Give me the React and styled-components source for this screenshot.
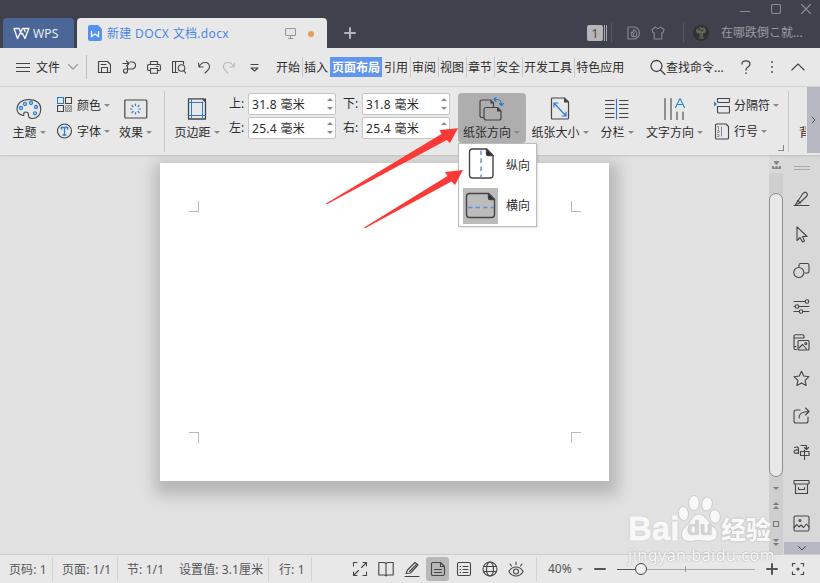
import React from 'react';
import styled, { createGlobalStyle } from 'styled-components';

const INK = '#454545';
const BLUE = '#2b7cd3';

const GlobalStyle = createGlobalStyle`
  * { box-sizing: border-box; }
  body {
    margin: 0;
    overflow: hidden;
    font-family: "Noto Sans", "Noto Sans CJK SC", sans-serif;
    font-size: 12px;
    color: #2c2c2c;
  }
`;

function Glyph({ w = 16, h = 16, color = INK, sw = 1.1, children }) {
  return (
    <svg width={w} height={h} viewBox={`0 0 ${w} ${h}`} fill="none" stroke={color}
      strokeWidth={sw} strokeLinecap="round" strokeLinejoin="round">
      {children}
    </svg>
  );
}

/* ---------- title bar ---------- */

function WindowControls() {
  return (
    <Controls>
      <Glyph w={10} h={12} color="#8a8d96"><path d="M0 8.5H10" /></Glyph>
      <Glyph w={10} h={12} color="#8a8d96"><rect x="0.5" y="1.500" width="9" height="9" rx="1.5" /></Glyph>
      <Glyph w={10} h={12} color="#8a8d96"><path d="M.5 1.500L9.5 10.500M9.5 1.500L.5 10.500" /></Glyph>
    </Controls>
  );
}

function TitleBar() {
  return (
    <TitleRow>
      <WpsTab>
        <Glyph w={17} h={13} color="#f4f6fa" sw={1.4}>
          <path d="M1 1.500H6L8.500 7M1 1.500L4.500 11.500L9.500 1.500H15.800L12 11.500L9.500 6.500M12 4.500L11 1.500" />
        </Glyph>
        <span>WPS</span>
      </WpsTab>
      <DocTab>
        <svg width="14" height="16" viewBox="0 0 14 16">
          <path d="M2 0H10L14 4V14Q14 16 12 16H2Q0 16 0 14V2Q0 0 2 0Z" fill="#5591f3" />
          <path d="M3.500 6V11.5L7 9L10.500 11.5V6" fill="none" stroke="#fff" strokeWidth="1.3" />
        </svg>
        <DocName>新建 DOCX 文档.docx</DocName>
        <Glyph w={12} h={12} color="#959595">
          <rect x="0.5" y="1.500" width="10" height="7" rx="1" /><path d="M5.500 9V11M3.5 11.500H8" />
        </Glyph>
        <UnsavedDot />
      </DocTab>
      <NewTab><Glyph w={12} h={12} color="#b3b5ba" sw={2}><path d="M6 1V11M1 6H11" /></Glyph></NewTab>
      <TitleRight>
        <CountBadge>1</CountBadge>
        <StackLines />
        <DarkRule $ml={3} $mr={15} />
        <Glyph w={14} h={14} color="#858892">
          <path d="M1 1H6.5A6 6 0 0 1 6.5 13H1Z" />
          <path d="M7 3.5Q7.5 5 9.5 6Q11 10.5 7 10.8Q3.300 10.500 4.500 6Q5.500 6.500 5.700 6.800Q6 5 7 3.500ZM7 10.500Q5.500 9 7.200 7" />
        </Glyph>
        <Shirt>
          <Glyph w={14} h={14} color="#858892">
            <path d="M4.500 1Q7 4 9.500 1L13 3.500L12 6.800H10.800V13H3.200V6.800H2L1 3.500Z" />
          </Glyph>
        </Shirt>
        <DarkRule $ml={18} $mr={9} />
        <svg width="16" height="16" viewBox="0 0 16 16">
          <circle cx="8" cy="8" r="8" fill="#30322f" />
          <path d="M3 6L4 3L6 4L7 1.500L9 3L11 2L13 5L12.500 7.500L10 8.500L6 8L4 8.500Z" fill="#61645b" />
          <path d="M5.500 7.500H10.500L9.500 10L11 13.500H5.500L7 10Z" fill="#6e6d62" />
          <path d="M4.500 5L7 4L8.500 6L11 4.500M7 9H9M6 12H10" stroke="#34362f" fill="none" />
        </svg>
        <UserName>在哪跌倒こ就...</UserName>
      </TitleRight>
      <WindowControls />
    </TitleRow>
  );
}

/* ---------- menu bar ---------- */

const QUICK = [
  <><path d="M1.500 1.500H10.500L13.500 4.500V12.500H1.500Z" /><path d="M4.500 12.500V7.500H10.500V12.500M4 4.500H9" /></>,
  <><path d="M1 3.500H6.500M4.500 1L7 3.500L4.500 6M8 2H10A3.500 3.500 0 0 1 10 9H3.500A2 2 0 1 0 5.500 11V6.500" /></>,
  <><path d="M3.500 4V1.500H10.500V4M3 10.500H1.500Q.6 10.500 .6 9.500V5.500Q.6 4.500 2 4.500H12Q13.400 4.500 13.400 5.500V9.500Q13.400 10.500 12.500 10.500H11M3.500 8.500H10.500V13.300H3.500ZM9.500 6.500H11" /></>,
  <><path d="M5.500 12.500H.5V1.500H11.500V4M3.500 1.500V12.500M12 11L14 13.300" /><circle cx="9.500" cy="8" r="3.300" /></>,
  <path d="M1.500 3L2 7H6M2 7Q4 2.500 8 2.500A4 4 0 0 1 12.500 7Q12.500 9 8 13" />,
];

const MENUS = ['开始', '插入', '页面布局', '引用', '审阅', '视图', '章节', '安全', '开发工具', '特色应用'];

function MenuBar() {
  return (
    <MenuRow>
      <FileMenu>
        <Glyph w={14} h={11}><path d="M0 1.500H14M0 5.500H14M0 9.500H14" /></Glyph>
        <span>文件</span>
        <Glyph w={10} h={6} color="#999"><path d="M.5 .5L5 5L9.500 .5" /></Glyph>
      </FileMenu>
      <QuickTools>
        {QUICK.map((q, i) => <Glyph key={i} w={14} h={14}>{q}</Glyph>)}
        <Glyph w={14} h={14} color="#b8b8b8">
          <path d="M12.500 3L12 7H8M12 7Q10 2.500 6 2.500A4 4 0 0 0 1.500 7Q1.500 9 6 13" />
        </Glyph>
        <Glyph w={14} h={14}><path d="M4 4.500H11M4 8L7.500 11L11 8Z" /></Glyph>
      </QuickTools>
      <Menus>
        {MENUS.map((m) => <MenuItem key={m} $active={m === '页面布局'}>{m}</MenuItem>)}
      </Menus>
      <Search>
        <Glyph w={16} h={16} sw={1.3}><circle cx="6.500" cy="7" r="5.500" /><path d="M10.500 11L15 15.500" /></Glyph>
        <span>查找命令...</span>
      </Search>
      <MenuEnd>
        <Glyph w={10} h={14} sw={1.3}>
          <path d="M1 4Q1 .8 5 .8Q9 .8 9 4Q9 5.800 7 7Q5 8 5 10" /><path d="M5 13V13.200" strokeWidth="1.600" />
        </Glyph>
        <Glyph w={4} h={14} sw={1.8}><path d="M2 2V2.100M2 7V7.100M2 12V12.100" /></Glyph>
        <Glyph w={14} h={8}><path d="M.8 7L7 1L13.200 7" /></Glyph>
      </MenuEnd>
    </MenuRow>
  );
}

/* ---------- ribbon ---------- */

const PaletteIcon = () => (
  <Glyph w={26} h={22}>
    <path d="M7 17.500Q1 16 1 11Q1.500 2 13 1.500Q24.500 2 24.800 11Q24.500 20 16.500 20.500Q12.500 20.500 12.500 17.500Q12.800 14 9.500 14Q7.500 14 7.800 16.500Q8 17.800 7 17.500Z" />
    <g fill="#a7c9ec" stroke={BLUE}>
      <circle cx="5" cy="10" r="1.600" /><circle cx="9" cy="6" r="1.600" /><circle cx="15" cy="5" r="1.600" />
      <circle cx="20" cy="9" r="1.600" /><circle cx="19" cy="15.300" r="1.600" />
    </g>
  </Glyph>
);
const ColorsIcon = () => (
  <Glyph w={16} h={16}>
    <rect x="0.5" y="0.5" width="6" height="6" stroke={BLUE} /><rect x="8.500" y="0.5" width="6" height="6" />
    <rect x="0.500" y="8.500" width="6" height="6" />
    <rect x="8.500" y="8.500" width="6" height="6" stroke="#999" /><path d="M9 12L12 9M9.500 14L14 9.500M12 14L14 12" stroke="#999" />
  </Glyph>
);
const FontIcon = () => (
  <Glyph w={16} h={16}>
    <circle cx="7.500" cy="8" r="7" /><path d="M4.300 6V4.500H10.700V6M7.500 4.500V12M6 12H9" stroke={BLUE} strokeWidth="1.300" />
  </Glyph>
);
const EffectIcon = () => (
  <Glyph w={24} h={20} sw={1.2}>
    <rect x="0.800" y="1" width="22" height="18" rx="1" />
    <path d="M11.500 5V6.500M11.500 13.500V15M6.500 10H8M15 10H16.500M8 6.500L9 7.500M14 12.500L15 13.500M15 6.500L14 7.500M9 12.500L8 13.500" stroke={BLUE} />
  </Glyph>
);
const MarginIcon = () => (
  <Glyph w={20} h={22} sw={1.3}>
    <path d="M1.500 .800H15.500L18.500 3.800V21H1.500Z" /><path d="M15 .5L19 4.500V.5Z" fill={INK} stroke="none" />
    <path d="M4.500 1.500V20.500M15.500 4V20.500M2 4.500H16M2 17.500H18" stroke={BLUE} strokeWidth="1" />
  </Glyph>
);
const OrientIcon = () => (
  <Glyph w={26} h={24} sw={1.2}>
    <path d="M4.500 20.500H3Q1 20.500 1 18.500V5Q1 3 3 3H11.500L14.500 6V9.500" />
    <path d="M7 10.500H18.500L22 14V21Q22 23 20 23H7Q5 23 5 21V12.500Q5 10.500 7 10.500Z" />
    <path d="M18 10.500L22.500 14.500H18ZM11.500 3L15 6.500H11.500Z" fill={INK} stroke="none" />
    <path d="M15 2.500H18Q22.500 2.500 22.500 8.500M17 .5L15 2.500L17 4.500M20.500 6.500L22.500 8.700L24.500 6.500" stroke={BLUE} />
  </Glyph>
);
const SizeIcon = () => (
  <Glyph w={20} h={23} sw={1.2}>
    <path d="M2.500 1H14.500L18.500 5V21Q18.500 22 17.500 22H2.500Q1.500 22 1.500 21V2Q1.500 1 2.500 1Z" />
    <path d="M14 1L18.800 5.500H14Z" fill={INK} stroke="none" />
    <path d="M4 6L16 19M4 10V6H8M12 19H16V15" stroke={BLUE} />
  </Glyph>
);
const ColumnsIcon = () => (
  <Glyph w={24} h={22}>
    <path d="M.5 2.500H9M.5 6.500H9M.5 10.500H9M.5 15.500H9M.5 19.500H9M14.500 2.500H23M14.500 6.500H23M14.500 10.500H23M14.500 15.500H23M14.500 19.500H23" />
    <path d="M11.500 1V21" stroke={BLUE} />
  </Glyph>
);
const TextDirIcon = () => (
  <Glyph w={22} h={24}>
    <path d="M1 1.500V22.500M7 1.500V22.500M13 15V22.500M19 15V22.500" />
    <path d="M11.500 10.500L16 1.500L20.500 10.500M13.500 7.500H18.500" stroke={BLUE} />
  </Glyph>
);
const BreakIcon = () => (
  <Glyph w={17} h={17}>
    <path d="M3.500 1.500H15.500V4.500Q15.500 5.500 14.500 5.500H4.500Q3.500 5.500 3.500 4.500ZM3.500 9.500H15.500M3.500 9.500V15Q3.500 16 4.500 16H14.500Q15.500 16 15.500 15V11.500Q15.500 9.500 14 9.500" />
    <path d="M0 4.500L3 7L0 9.500Z" fill={BLUE} stroke="none" />
  </Glyph>
);
const LineNoIcon = () => (
  <Glyph w={16} h={17}>
    <path d="M2.500 1H12L14.500 3.500V15Q14.500 16 13.500 16H2.500Q1.500 16 1.500 15V2Q1.500 1 2.500 1Z" />
    <path d="M7.500 4V13M3.500 3.500H4.500V6M3.500 7.500H5V9.500H3.500M3.500 11.500H5V13.500H3.500" stroke="#888" strokeWidth="1" />
  </Glyph>
);

const BigButton = ({ icon, label, ...rest }) => (
  <BigBox {...rest}>
    <IconSlot>{icon}</IconSlot>
    <Caption>{label}<Caret /></Caption>
  </BigBox>
);

const SmallButton = ({ icon, label }) => (
  <SmallBox><SmallSlot>{icon}</SmallSlot><Low>{label}</Low><Caret /></SmallBox>
);

const MarginInput = ({ label, value }) => (
  <Field>
    <FieldLabel>{label}:</FieldLabel>
    <Spin>
      <Low>{value} 毫米</Low>
      <Steppers><Caret $up /><Caret /></Steppers>
    </Spin>
  </Field>
);

function Ribbon() {
  return (
    <RibbonRow>
      <BigButton icon={<PaletteIcon />} label="主题" $w={58} />
      <Pair $w={56} $ml={-1}>
        <SmallButton icon={<ColorsIcon />} label="颜色" />
        <SmallButton icon={<FontIcon />} label="字体" />
      </Pair>
      <BigButton icon={<EffectIcon />} label="效果" $w={45} />
      <Rule $ml={6} $mr={0} />
      <BigButton icon={<MarginIcon />} label="页边距" $w={64} />
      <Pair $w={114}>
        <MarginInput label="上" value="31.8" />
        <MarginInput label="左" value="25.4" />
      </Pair>
      <Pair $w={108}>
        <MarginInput label="下" value="31.8" />
        <MarginInput label="右" value="25.4" />
      </Pair>
      <OrientWrap>
        <BigButton icon={<OrientIcon />} label="纸张方向" $w={68} $on />
        <OrientMenu />
      </OrientWrap>
      <BigButton icon={<SizeIcon />} label="纸张大小" $w={68} />
      <BigButton icon={<ColumnsIcon />} label="分栏" $w={46} />
      <BigButton icon={<TextDirIcon />} label="文字方向" $w={69} />
      <Pair $w={67} $ml={5}>
        <SmallButton icon={<BreakIcon />} label="分隔符" />
        <SmallButton icon={<LineNoIcon />} label="行号" />
      </Pair>
      <Launcher><Glyph w={6} h={6} color="#888"><path d="M5.500 0V5.500H0" /></Glyph></Launcher>
      <Rule $ml={4} $mr={10} />
      <Clipped>背</Clipped>
      <RibbonScroll><Glyph w={5} h={8} color="#555" sw={1}><path d="M1 1L4 4L1 7" /></Glyph></RibbonScroll>
    </RibbonRow>
  );
}

function OrientMenu() {
  return (
    <Popup>
      <PopupItem>
        <PopupIcon $lift={5}>
          <Glyph w={26} h={31} sw={1.4}>
            <path d="M4.500 1H18.500L25 7.500V27Q25 30 22 30H4.500Q1.500 30 1.500 27V4Q1.500 1 4.500 1Z" />
            <path d="M18.500 1L25 7.500H20Q18.500 7.500 18.500 6Z" fill="#2b2b2b" />
            <path d="M13 2.500V29.500" stroke="#5b8fe0" strokeDasharray="4.500 3.500" strokeLinecap="butt" />
          </Glyph>
        </PopupIcon>
        纵向
      </PopupItem>
      <PopupItem>
        <PopupIcon $on $lift={2}>
          <Glyph w={31} h={27} sw={1.4}>
            <path d="M4.500 1.500H23.500L29.500 7.500V22.500Q29.500 25.500 26.500 25.500H4.500Q1.500 25.500 1.500 22.500V4.500Q1.500 1.500 4.500 1.500Z" />
            <path d="M23.500 1.500L29.500 7.500H25Q23.500 7.500 23.500 6Z" fill="#2b2b2b" />
            <path d="M3 15.500H29" stroke="#5b8fe0" strokeDasharray="4.500 3" strokeLinecap="butt" />
          </Glyph>
        </PopupIcon>
        横向
      </PopupItem>
    </Popup>
  );
}

/* ---------- work area ---------- */

const SIDE = [
  <><path d="M1 15.500H16M2.500 14.500L10 3.500L12 2Q14 2.500 14.500 4.500L13.500 6.500L6 13.500ZM4.500 10.500L7.500 13" /></>,
  <path d="M4 .8V14.500L7 11.500L9.500 16L11.500 15L9.500 10.500H14Z" />,
  <><path d="M6 4.500V3Q6 1.500 7.500 1.500H14.500Q16 1.500 16 3V9.500Q16 11 14.500 11H12" /><circle cx="5.800" cy="10.500" r="5" /></>,
  <><path d="M1 3.500H12M1 8.500H2.500M5.500 8.500H16M1 13.500H6M9.500 13.500H16" /><circle cx="14" cy="3.500" r="1.800" /><circle cx="4" cy="8.500" r="1.800" /><circle cx="8" cy="13.500" r="1.800" /></>,
  <><path d="M3.500 15.500H2.500Q1 15.500 1 14V2Q1 .8 2.500 .8H9.500Q11 .8 11 2V4M1 4H11M3 12.500H1" /><rect x="5" y="6.500" width="11" height="9.500" rx="1" /><path d="M6 14L9.500 10.500L13.500 15" /><circle cx="12.800" cy="9.500" r="1" /></>,
  <path d="M8.500 1.200L10.700 6L16 6.700L12.100 10.300L13.100 15.500L8.500 12.900L3.900 15.500L4.900 10.300L1 6.700L6.300 6Z" />,
  <><path d="M7 3H3Q1 3 1 5V14Q1 16 3 16H13Q15 16 15 14V10M6 11Q6 4.500 15.500 4.500M12.500 1L16 4.500L12.500 8" /></>,
  <><path d="M1.500 4.500Q5.500 3 5.500 6V10.500M5.500 7Q1 6.500 1 8.800Q1.500 11.500 5.500 9.500M8 2.500H13.500V6M11.500 4.500L13.500 6.500L15.500 4.500M7.500 8.500H16V12.500H7.500ZM11.500 7V16.500" /></>,
  <><rect x="1" y="1.500" width="15" height="3.500" rx="0.500" /><path d="M2.500 5.500V14.500H14.500V5.500M5.500 8.500V10.500H11.500V8.500" /></>,
  <><rect x="1" y="1" width="15" height="15" rx="1.500" /><path d="M1 12.500L4 9.500L6 12L8 10L10.500 12.500L13.500 9L16 12" /><circle cx="7" cy="5.500" r="1" /></>,
];

function WorkArea() {
  return (
    <Work>
      <Canvas>
        <Page>
          <Corner $b /><Corner $b $l />
          <Corner /><Corner $l />
        </Page>
      </Canvas>
      <ScrollBar>
        <RulerToggle>
          <svg width="9" height="9" viewBox="0 0 9 9" fill="#888">
            <path d="M2 0H7V1.500L4.500 4L2 1.500ZM0 5H2V6.500H3.500V5H5.500V6.500H7V5H9V8H0Z" />
          </svg>
        </RulerToggle>
        <Up><Caret $up $dark /></Up>
        <Thumb />
        <Steps>
          <Caret $dark />
          <div><Caret $up $dark /><Caret $up $dark /></div>
          <Square />
          <div><Caret $dark /><Caret $dark /></div>
        </Steps>
      </ScrollBar>
      <SidePanel>
        <Grip />
        <SideIcons>
          {SIDE.map((s, i) => <Glyph key={i} w={17} h={17}>{s}</Glyph>)}
        </SideIcons>
        <SideMore><Glyph w={8} h={5} sw={1}><path d="M.5 .5L4 4L7.500 .5" /></Glyph></SideMore>
      </SidePanel>
    </Work>
  );
}

/* ---------- status bar ---------- */

const VIEWS = [
  <path d="M1.500 5V1.500H5M1.500 11V14.500H5M11 14.500H14.500V11M11 1.500H14.500V5M9.500 6.500L14 2M6.500 9.500L2 14" />,
  <path d="M8 2.500V15M8 2.500Q7 1.500 5.500 1.500H.8V14H6Q7.500 14 8 15Q8.500 14 10 14H15.200V1.500H10.500Q9 1.500 8 2.500" />,
  <path d="M1 15.500H15M2 12.500L3.500 9L11 1.500L14 4L6.500 12ZM5.500 10.500L12 4" />,
  <path d="M2.500 1.500H10.500L14.500 5.500V13Q14.500 14.500 13 14.500H2.500Q1.500 14.500 1.500 13V2.500Q1.500 1.500 2.500 1.500ZM10.500 1.500V5.500H14.500M4.500 8.500H11.500M4.500 11.500H11.500" />,
  <><rect x="1.500" y="1.500" width="13" height="13" rx="1.500" /><path d="M4 5.500H4.500M7 5.500H12M4 8.500H4.500M7 8.500H12M4 11.500H4.500M7 11.500H12" /></>,
  <><circle cx="8" cy="8" r="7" /><ellipse cx="8" cy="8" rx="3.500" ry="7" /><path d="M1.800 5.500H14.200M1.800 10.500H14.200" /></>,
  <><path d="M.8 10.500Q3.500 6 8 6Q12.500 6 15.200 10.500Q12.500 15 8 15Q3.500 15 .8 10.500ZM8 1V3.500M2 3L3.500 5M14 3L12.500 5" /><circle cx="8" cy="10.500" r="2.500" /></>,
];

function StatusBar() {
  return (
    <Status>
      <Stat $w={53} $pl={9} $line>页码: 1</Stat>
      <Stat $w={65} $pl={9} $line>页面: 1/1</Stat>
      <Stat $w={61} $pl={9}>节: 1/1</Stat>
      <Stat $w={90} $pl={0} $line>设置值: 3.1厘米</Stat>
      <Stat $w={43} $pl={10} $line>行: 1</Stat>
      <Views>
        {VIEWS.map((v, i) => <ViewButton key={i} $on={i === 3}><Glyph>{v}</Glyph></ViewButton>)}
      </Views>
      <Zoom>40%<Caret /></Zoom>
      <Glyph w={12} h={12} color="#555" sw={2}><path d="M1 6H11" /></Glyph>
      <Slider><Knob /><Tick /></Slider>
      <Glyph w={12} h={12} color="#555" sw={2}><path d="M1 6H11M6 1V11" /></Glyph>
      <Fit>
        <Glyph w={14} h={14} sw={1.2}>
          <path d="M1.500 4V1.500H4M1.500 10V12.500H4M10 12.500H12.500V10M10 1.500H12.500V4" /><circle cx="7" cy="7" r="1" fill={INK} />
        </Glyph>
      </Fit>
    </Status>
  );
}

/* ---------- things lying over the window ---------- */

function Arrows() {
  return (
    <ArrowLayer width="150" height="110" viewBox="320 122 150 110" fill="#fb3a38">
      <path d="M326 203.500L441.500 134L439.500 130L458 128.200L450 143L446.800 140L327 204.300Z" />
      <path d="M364 227.500L447.500 176L445 172L463 170L455 185L451.500 181.500L365 228.300Z" />
    </ArrowLayer>
  );
}

function Watermark() {
  return (
    <Mark>
      <MarkTop>
        <MarkText>Bai</MarkText>
        <Paw>
          <svg width="44" height="48" viewBox="0 0 44 48" fill="#fafafa" stroke="#c4c4c4" strokeWidth="0.800">
            <ellipse cx="5.500" cy="18.500" rx="5" ry="7" transform="rotate(-8 5.500 18.500)" />
            <ellipse cx="16" cy="8" rx="5.300" ry="7.500" />
            <ellipse cx="29" cy="9" rx="5.300" ry="7" transform="rotate(12 29 9)" />
            <ellipse cx="37" cy="21.500" rx="5.300" ry="6.800" transform="rotate(-8 37 21.500)" />
            <path d="M21 19Q26 19 29 24.500Q32 29 37 33Q42 41 36 45Q31 47.500 26 46Q21 45 16 46Q8 48 4 43Q2 37 7 32Q11 29 14 23.500Q17 19 21 19Z" />
          </svg>
          <Du>du</Du>
        </Paw>
        <MarkCn>经验</MarkCn>
      </MarkTop>
      <MarkUrl>jingyan.baidu.com</MarkUrl>
    </Mark>
  );
}

function App() {
  return (
    <Window>
      <GlobalStyle />
      <TitleBar />
      <MenuBar />
      <Ribbon />
      <WorkArea />
      <StatusBar />
      <Arrows />
      <Watermark />
    </Window>
  );
}

export default App;


const Window = styled.div`
  position: relative;
  width: 820px;
  height: 583px;
  display: flex;
  flex-direction: column;
  overflow: hidden;
  background: #e1e1e1;
  white-space: nowrap;
  line-height: 16px;
  svg { flex: none; display: block; }
`;

const TitleRow = styled.div`
  position: relative;
  height: 48px;
  display: flex;
  align-items: flex-end;
  padding-left: 3px;
  background: #3f424d;
`;

const WpsTab = styled.div`
  width: 71px;
  height: 30px;
  display: flex;
  align-items: center;
  gap: 3px;
  padding-left: 10px;
  border-radius: 4px 4px 0 0;
  background: #4a6797;
  color: #e8ecf3;
  letter-spacing: .2px;
  span { padding-top: 2px; }
`;

const DocTab = styled.div`
  width: 250px;
  height: 30px;
  margin-left: 3px;
  display: flex;
  align-items: center;
  padding-left: 11px;
  border-radius: 4px 4px 0 0;
  background: #e8e8e8;
`;

const DocName = styled.span`
  width: 178px;
  margin-left: 5px;
  padding-top: 2px;
  color: #4b86e8;
  letter-spacing: .33px;
`;

const UnsavedDot = styled.div`
  width: 6px;
  height: 6px;
  margin: 1px 0 0 11px;
  border-radius: 50%;
  background: #e59d57;
`;

const NewTab = styled.div`
  height: 30px;
  margin-left: 17px;
  display: flex;
  align-items: center;
`;

const TitleRight = styled.div`
  width: 233px;
  height: 30px;
  margin-left: auto;
  display: flex;
  align-items: center;
`;

const CountBadge = styled.div`
  width: 16px;
  height: 16px;
  border-radius: 2px;
  background: #b5b6ba;
  color: #5d4a3a;
  font-size: 13px;
  text-align: center;
`;

const StackLines = styled.div`
  width: 5px;
  height: 16px;
  background: repeating-linear-gradient(90deg, transparent 0 1px, #a5a7ac 1px 2px);
`;

const DarkRule = styled.div`
  width: 1px;
  height: 20px;
  margin: 0 ${(p) => p.$mr}px 0 ${(p) => p.$ml}px;
  background: #555862;
`;

const Shirt = styled.div`
  margin-left: 10px;
`;

const UserName = styled.span`
  margin: -1px 0 0 12px;
  color: #9a9ca3;
`;

const Controls = styled.div`
  position: absolute;
  top: 3px;
  right: 9px;
  display: flex;
  gap: 20.500px;
`;

const MenuRow = styled.div`
  height: 39px;
  display: flex;
  align-items: center;
  border-bottom: 1px solid #d4d4d4;
  background: #e8e8e8;
`;

const FileMenu = styled.div`
  width: 87px;
  height: 24px;
  display: flex;
  align-items: center;
  gap: 6px;
  padding-left: 16px;
  border-right: 1px solid #bdbdbd;
  svg:last-child { margin-left: 2px; }
  span { padding-top: 2px; }
`;

const QuickTools = styled.div`
  width: 189px;
  padding-left: 10px;
  display: flex;
  gap: 11px;
`;

const Menus = styled.div`
  width: 374px;
  display: flex;
`;

const MenuItem = styled.span`
  height: 20px;
  padding-top: 1px;
  line-height: 20px;
  ${(p) => p.$active ? `
    width: 52px;
    margin: 0 2px 0 -2px;
    padding-left: 2px;
    background: #6295ec;
    color: #fff;
    font-weight: 700;
  ` : `
    padding-right: 1.500px;
    margin-right: 1.500px;
    border-right: 1px solid #c9c9c9;
  `}
  &:nth-child(2), &:last-child { border-color: transparent; }
`;

const Search = styled.div`
  width: 91px;
  display: flex;
  align-items: center;
  span { padding-top: 1px; }
`;

const MenuEnd = styled.div`
  display: flex;
  align-items: center;
  svg:nth-child(2) { margin: 0 17px 0 19px; }
`;

const RibbonRow = styled.div`
  position: relative;
  z-index: 2;
  height: 68px;
  display: flex;
  background: #e8e8e8;
  box-shadow: 0 1px 2px rgba(0, 0, 0, .12);
`;

const BigBox = styled.div`
  flex: none;
  width: ${(p) => p.$w}px;
  height: 50px;
  margin-top: 6px;
  display: flex;
  flex-direction: column;
  align-items: center;
  border-radius: 4px;
  background: ${(p) => p.$on ? '#aeaeae' : 'transparent'};
  ${(p) => p.$on && 'padding-right: 1px;'}
`;

const IconSlot = styled.div`
  height: 31px;
  display: flex;
  align-items: center;
`;

const Caption = styled.div`
  display: flex;
  align-items: center;
  padding-top: 1px;
`;

const Low = styled.span`
  padding-top: 2px;
`;

const Caret = styled.i`
  flex: none;
  width: 0;
  height: 0;
  margin-left: 3px;
  border: 3px solid transparent;
  ${(p) => p.$up ? 'border-top-width: 0; border-bottom-color' : 'border-bottom-width: 0; border-top-color'}: ${(p) => p.$dark ? '#7b7b7b' : '#8a8a8a'};
  ${BigBox} & { margin-top: -1px; }
`;

const Pair = styled.div`
  flex: none;
  width: ${(p) => p.$w}px;
  margin-left: ${(p) => p.$ml || 0}px;
  padding-top: 6px;
  display: flex;
  flex-direction: column;
  gap: 2px;
`;

const SmallBox = styled.div`
  height: 24px;
  display: flex;
  align-items: center;
`;

const SmallSlot = styled.div`
  width: 20px;
`;

const Field = styled.div`
  display: flex;
  align-items: center;
  height: 22px;
`;

const FieldLabel = styled.span`
  width: 19px;
`;

const Spin = styled.div`
  width: 88px;
  height: 22px;
  display: flex;
  align-items: center;
  padding-left: 3px;
  border: 1px solid #c6c6c6;
  border-radius: 2px;
  background: #fff;
  letter-spacing: .3px;
`;

const Steppers = styled.div`
  height: 12px;
  margin: 0 2px 0 auto;
  display: flex;
  flex-direction: column;
  justify-content: space-between;
`;

const Rule = styled.div`
  flex: none;
  width: 1px;
  height: 61px;
  margin: 4px ${(p) => p.$mr}px 0 ${(p) => p.$ml}px;
  background: #c8c8c8;
`;

const OrientWrap = styled.div`
  position: relative;
  margin-left: 7px;
`;

const Popup = styled.div`
  position: absolute;
  top: 56px;
  left: 0;
  width: 79px;
  height: 84px;
  padding: 2px 4px;
  border: 1px solid #bcbcbc;
  background: #fff;
  box-shadow: 1px 1px 2px rgba(0, 0, 0, .12);
`;

const PopupItem = styled.div`
  height: 40px;
  display: flex;
  align-items: center;
  gap: 8px;
`;

const PopupIcon = styled.div`
  width: 35px;
  height: 36px;
  padding-bottom: ${(p) => p.$lift}px;
  display: flex;
  align-items: center;
  justify-content: center;
  background: ${(p) => p.$on ? '#bcbcbc' : 'transparent'};
`;

const Launcher = styled.div`
  align-self: flex-end;
  flex: none;
  padding-bottom: 4px;
  margin-left: -3px;
`;

const Clipped = styled.span`
  flex: none;
  width: 7px;
  height: 16px;
  margin-top: 38px;
  overflow: hidden;
`;

const RibbonScroll = styled.div`
  flex: none;
  width: 13px;
  height: 66px;
  margin-left: auto;
  display: flex;
  align-items: center;
  justify-content: center;
  background: #b6b9c2;
`;

const Work = styled.div`
  flex: 1;
  display: flex;
  min-height: 0;
`;

const Canvas = styled.div`
  width: 769px;
  padding: 8px 0 0 160px;
  overflow: hidden;
`;

const Page = styled.div`
  width: 449px;
  height: 318px;
  padding: 38px 28px 38px 29px;
  display: grid;
  grid-template-columns: 10px 10px;
  justify-content: space-between;
  align-content: space-between;
  background: #fff;
  box-shadow: 2px 7px 14px 7px rgba(0, 0, 0, .19);
`;

const Corner = styled.div`
  width: 10px;
  height: 11px;
  border: 0 solid #b9b9b9;
  ${(p) => p.$b ? 'border-bottom-width' : 'border-top-width'}: 1px;
  ${(p) => p.$l ? 'border-left-width' : 'border-right-width'}: 1px;
`;

const ScrollBar = styled.div`
  width: 14px;
  display: flex;
  flex-direction: column;
  align-items: center;
  background: #cfcfcf;
  i { margin-left: 0; }
`;

const RulerToggle = styled.div`
  width: 14px;
  height: 18px;
  padding: 6px 0 0 3px;
  background: #d9d9d9;
`;

const Up = styled.div`
  height: 20px;
  padding-top: 8px;
`;

const Thumb = styled.div`
  width: 14px;
  height: 284px;
  border: 1px solid #8d8d8d;
  border-radius: 7px;
  background: #e8e8e8;
`;

const Steps = styled.div`
  height: 72px;
  padding-top: 10px;
  display: flex;
  flex-direction: column;
  align-items: center;
  gap: 12px;
  div > i { display: block; }
  div > i + i { margin-top: 1px; }
`;

const Square = styled.span`
  width: 6px;
  height: 6px;
  border: 1px solid #777;
`;

const SidePanel = styled.div`
  width: 37px;
  display: flex;
  flex-direction: column;
  align-items: center;
  background: #d8d8d8;
`;

const Grip = styled.div`
  width: 16px;
  height: 4px;
  margin: 11px 0 20px;
  border: 1px solid #aaa;
  border-width: 1px 0;
`;

const SideIcons = styled.div`
  flex: 1;
  display: flex;
  flex-direction: column;
  gap: 19.100px;
`;

const SideMore = styled.div`
  width: 36px;
  height: 12px;
  margin-left: 1px;
  display: flex;
  align-items: center;
  justify-content: center;
  background: #b6b9c2;
`;

const Status = styled.div`
  height: 29px;
  display: flex;
  align-items: center;
  border-top: 1px solid #cdcdcd;
  background: #e8e8e8;
  color: #555;
`;

const Stat = styled.div`
  flex: none;
  width: ${(p) => p.$w}px;
  height: 24px;
  padding: 1px 0 0 ${(p) => p.$pl}px;
  line-height: 24px;
  letter-spacing: .1px;
  border-right: ${(p) => p.$line ? '1px solid #d3d3d3' : 'none'};
`;

const Views = styled.div`
  width: 225px;
  height: 24px;
  padding-left: 36px;
  display: flex;
  gap: 3px;
  border-right: 1px solid #d3d3d3;
`;

const ViewButton = styled.div`
  flex: none;
  width: 23px;
  height: 24px;
  display: flex;
  align-items: center;
  justify-content: center;
  border-radius: 3px;
  background: ${(p) => p.$on ? '#b8b8b8' : 'transparent'};
`;

const Zoom = styled.div`
  width: 57px;
  padding-left: 11px;
  display: flex;
  align-items: center;
  i { margin-left: 5px; }
`;

const Slider = styled.div`
  position: relative;
  width: 138px;
  height: 1px;
  margin: 0 11px;
  background: linear-gradient(90deg, #555 18px, #aaa 18px);
`;

const Knob = styled.span`
  position: absolute;
  left: 18px;
  top: -6px;
  width: 12px;
  height: 12px;
  border: 1px solid #444;
  border-radius: 50%;
  background: #f2f2f2;
`;

const Tick = styled.span`
  position: absolute;
  left: 68px;
  top: -3px;
  width: 1px;
  height: 6px;
  background: #999;
`;

const Fit = styled.div`
  margin-left: 13px;
`;

const ArrowLayer = styled.svg`
  position: absolute;
  z-index: 3;
  left: 320px;
  top: 122px;
`;

const Mark = styled.div`
  position: absolute;
  z-index: 3;
  left: 628px;
  top: 495px;
  color: #fafafa;
  text-shadow: 0 0 1px #aaa, 0 0 2px #bbb;
  opacity: .95;
`;

const MarkTop = styled.div`
  height: 50px;
  display: flex;
`;

const MarkText = styled.span`
  width: 50px;
  font: 700 33px/50px "Liberation Sans", sans-serif;
  padding-top: 9px;
  -webkit-text-stroke: .8px #fafafa;
`;

const Paw = styled.div`
  position: relative;
  width: 43px;
`;

const Du = styled.span`
  position: absolute;
  left: 9px;
  top: 21px;
  font: 700 21px/24px "Liberation Sans", sans-serif;
  color: #d4d4d4;
  text-shadow: 0 0 1px #aaa;
`;

const MarkCn = styled.span`
  font: 900 25px/50px "Noto Sans CJK SC", sans-serif;
  padding-top: 8px;
`;

const MarkUrl = styled.div`
  font: 16px/20px "Noto Sans", sans-serif;
  letter-spacing: .5px;
`;
